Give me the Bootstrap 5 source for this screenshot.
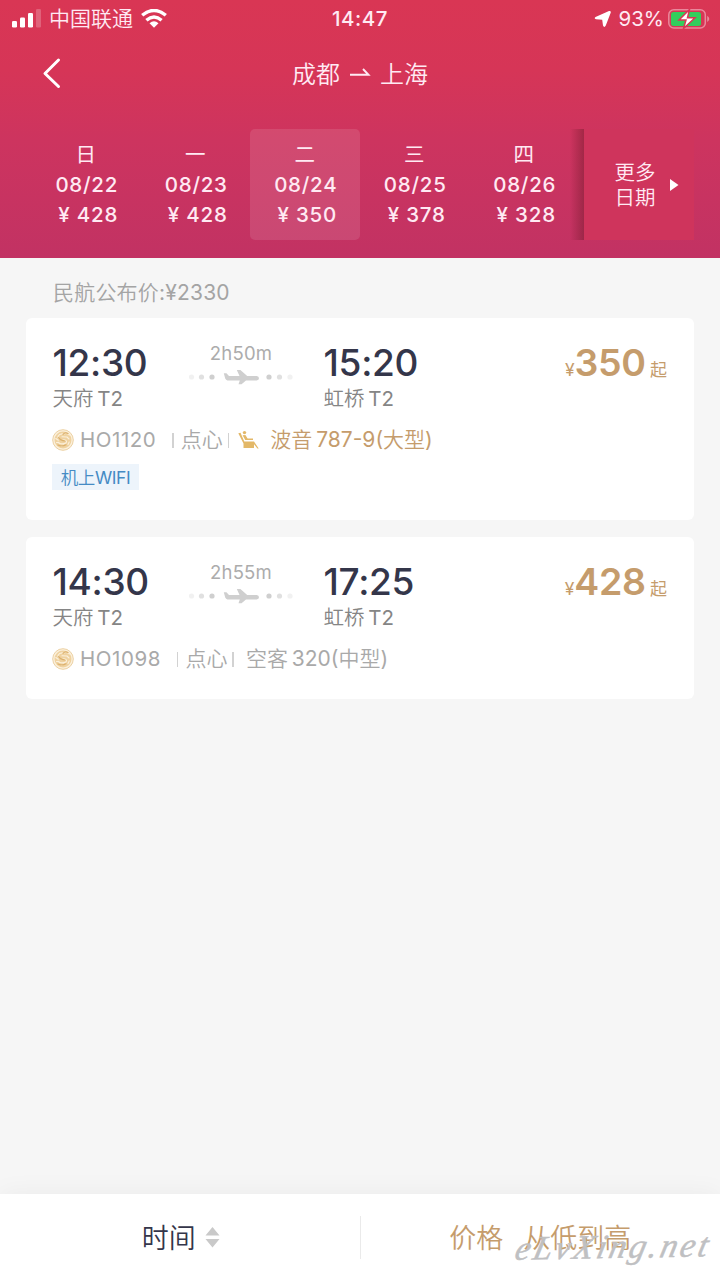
<!DOCTYPE html>
<html lang="zh-CN">
<head>
<meta charset="utf-8">
<meta name="viewport" content="width=device-width, initial-scale=1">
<title>成都 - 上海 航班</title>
<link href="https://cdn.jsdelivr.net/npm/bootstrap@5.3.0/dist/css/bootstrap.min.css" rel="stylesheet">
<style>
body{width:720px;height:1280px;overflow:hidden;background:#f6f6f6;font-family:Inter,"Noto Sans CJK SC",sans-serif;font-weight:350;color:#888;line-height:1}
svg{display:block;flex:none}
.t{white-space:nowrap}
.lat{font-weight:400}
.hero{height:258px;background:linear-gradient(#d93654 0,#d63557 70px,#cd345f 140px,#c23263 257px);color:#ffeaf3}
.status{height:37px;padding:0 10px 0 12px;font-size:21px}
.status .clock{left:0;right:0;top:0;line-height:37px;font-size:20.5px;font-weight:500;letter-spacing:.5px}
.titlebar{height:73px;font-size:24px;padding-top:2px}
.back{left:42px;top:20px}
.dates{margin:18.5px 26px 0 31px;height:111.5px}
.day{width:109.5px;padding-top:11px;font-size:20.5px;font-weight:500;line-height:30px;border-radius:5px}
.day.active{background:rgba(255,255,255,.11)}
.day .dn{font-weight:400;font-size:20.5px}
.day .dt{letter-spacing:.75px;padding-left:2px}
.day .pr{padding-left:5px;letter-spacing:.8px}
.edge{width:14px;margin-left:-8.5px;background:linear-gradient(90deg,rgba(110,25,40,0),rgba(110,25,40,.45))}
.more{width:110px;background:#cf345c;font-size:20.5px;line-height:24.5px;padding:3px 0 0 27px}
.more svg{position:relative;top:-1px}
.notice{height:60px;padding:20px 0 0 53px;font-size:21px;line-height:30px;color:#a4a4a4;letter-spacing:.2px}
.flight{margin:0 26.5px 17px 26px;padding:28px 26.5px 0 26.5px;border:0;border-radius:6px;background:#fff}
.f1{height:202px}.f2{height:162px}
.time{font-size:37px;font-weight:500;line-height:34px;height:34px;color:#34364a;letter-spacing:-.3px}
.port{font-size:20.5px;line-height:38px;height:38px;color:#858585;word-spacing:-2px}
.from{width:136px}.path{width:105px}.to{margin-left:30px;width:150px}
.dur{font-size:18.5px;font-weight:400;line-height:15px;height:13px;color:#acacac;letter-spacing:.2px}
.gold{color:#c59c6c}
.price{margin-left:auto;line-height:34px;height:34px}
.price b{font-size:37.5px;font-weight:600;letter-spacing:-.4px}
.price small{font-size:17.5px;font-weight:400}
.price small:last-child{font-size:17px}
.info{height:28px;margin-top:8px;font-size:21px;color:#a9a9a9;word-spacing:-2px}
.info .t{line-height:28px}
.num{margin:0 16px 0 6px;font-size:20.5px;font-weight:400;letter-spacing:.55px}
.bar{width:1.5px;height:15px;background:#d2d2d2}
.wifi{width:87px;height:26px;background:#edf4fb;color:#458bc4;font-size:17.5px;margin:10px 0 0 -.5px;padding-top:1px;letter-spacing:-.4px}
.sort{height:86px;background:#fff;box-shadow:0 -2px 24px rgba(0,0,0,.045);font-size:27px;line-height:40px;color:#34364a}
.sort .lbl{padding-top:3px}
.sort .vr-line{width:1px;height:43px;background:#eaeaea}
.stamp{right:9px;bottom:9px;font:italic 34px/48px "Liberation Serif",serif;color:#bfc0c2;-webkit-text-stroke:.5px #bfc0c2;letter-spacing:2.9px;transform:rotate(-1deg) skewX(-14deg)}
</style>
<script src="https://cdn.jsdelivr.net/npm/bootstrap@5.3.0/dist/js/bootstrap.bundle.min.js"></script>
</head>
<body class="d-flex flex-column position-relative">
<svg width="0" height="0" class="position-absolute"><defs>
<g id="plane" fill="#cfcfcf"><circle cx="2.500" cy="9" r="2.600" opacity=".3"/><circle cx="12.500" cy="9" r="2.600" opacity=".65"/><circle cx="23" cy="9" r="2.600"/><circle cx="80" cy="9" r="2.600"/><circle cx="90.500" cy="9" r="2.600" opacity=".65"/><circle cx="101" cy="9" r="2.600" opacity=".3"/>
<path d="M34.800 5.200h2.600l2.600 2.700h10.500L47.800 2h3.600l6.800 5.900h9.500q2.300.2 2.300 2.300t-2.300 2.200H57L52.500 16.200h-3l1.300-3.800H38.500q-1.600 0-2.300-1.800z"/></g>
<g id="logo"><circle cx="11" cy="11" r="10.300" fill="#fbf0dc" stroke="#ecd1a3" stroke-width="1"/><circle cx="11" cy="11" r="8.500" fill="#efd2a0"/><path d="M17.500 6q-3-2.500-6-1Q7.500 4.300 6 7.200q-.5 2.300 2.500 3.200l4.500.7q2.600 1 .8 3-2.600 1.500-6.800.2M3.800 9.500l2.500 1.800M10 7.800l5 .2 2 2M4.500 13.500l2.500-.2M9.500 17l2.200-.8M16 15.500l1.200-2.500" fill="none" stroke="#fbf0dc" stroke-width="1.100" stroke-linecap="round" stroke-linejoin="round"/><path d="M16 4.500q-3-1.500-5 .9M6.500 8.700q2 2.900 6.500 3.300M6 16q4 2 8-.2" fill="none" stroke="#dcb16d" stroke-width="1.200" stroke-linecap="round"/></g>
</defs></svg>
<header class="hero">
  <div class="status position-relative d-flex align-items-center">
    <svg width="30" height="20" viewBox="0 0 30 20" fill="#fff"><rect y="12" width="5" height="6.500" rx="1.300"/><rect x="8" y="8.500" width="5" height="10" rx="1.300"/><rect x="16" y="4" width="5" height="14.500" rx="1.300"/><rect x="24" y="0" width="5" height="18.500" rx="1.300" opacity=".22"/></svg>
    <span class="t" style="margin:0 0 0 7px">中国联通</span>
    <svg class="ms-2" width="26" height="20" viewBox="0 0 26 20" fill="none" stroke="#fff" stroke-width="3.400"><path d="M1.200 6.300Q13-3.400 24.800 6.300M5.400 11.200Q13 5 20.600 11.200"/><path d="M8.500 14.200Q13 10.500 17.500 14.200L13 18.800z" fill="#fff" stroke="none"/></svg>
    <div class="clock position-absolute text-center">14:47</div>
    <svg class="ms-auto" width="18" height="18" viewBox="0 0 18 18" fill="#fff"><path d="M1.500 6.900 15 1Q17.200.6 16.700 2.700L11.800 15.500Q10.200 18.300 9 15.500L8.200 9.800 2 9.300Q-.4 8.400 1.500 6.900z"/></svg>
    <span class="t lat" style="margin:1px 4px 0 6px;font-size:20.5px">93%</span>
    <svg width="42" height="20" viewBox="0 0 42 20"><rect x=".8" y=".8" width="36.500" height="18.200" rx="5" fill="none" stroke="#e9889b" stroke-width="1.500"/><path d="M39.200 6.800q4.200 3.100 0 6.200z" fill="#e9889b"/><rect x="3" y="3" width="30" height="14" rx="2.500" fill="#33cd5c"/><path d="M21.500.5 11 11h7l-2.500 8.500L27 8.700h-7.500z" fill="#fff" stroke="#d93654" stroke-width="1.500"/></svg>
  </div>
  <div class="titlebar position-relative d-flex justify-content-center align-items-center">
    <svg class="back position-absolute" width="20" height="32" viewBox="0 0 20 32" fill="none" stroke="#fff" stroke-width="3" stroke-linecap="round" stroke-linejoin="round"><path d="M16.500 3 3 16.500 16.500 29.500"/></svg>
    <span class="t">成都</span>
    <svg style="margin:-2px 9px 0 10px" width="21" height="14" viewBox="0 0 21 14" fill="none" stroke="#ffeaf3" stroke-width="1.900"><path d="M0 7.800h18.500L13 2"/></svg>
    <span class="t">上海</span>
  </div>
  <div class="dates d-flex text-center">
    <div class="day"><div class="dn">日</div><div class="dt">08/22</div><div class="pr">¥ 428</div></div>
    <div class="day"><div class="dn">一</div><div class="dt">08/23</div><div class="pr">¥ 428</div></div>
    <div class="day active"><div class="dn">二</div><div class="dt">08/24</div><div class="pr">¥ 350</div></div>
    <div class="day"><div class="dn">三</div><div class="dt">08/25</div><div class="pr">¥ 378</div></div>
    <div class="day"><div class="dn">四</div><div class="dt">08/26</div><div class="pr">¥ 328</div></div>
    <div class="edge"></div>
    <div class="more d-flex align-items-center justify-content-center"><span>更多<br>日期</span><svg style="margin:0 12px 0 14px" width="9" height="12" viewBox="0 0 9 12"><path d="M0 0 8.500 6 0 12z" fill="#fff"/></svg></div>
  </div>
</header>
<main class="flex-grow-1">
  <div class="notice t">民航公布价<span class="lat">:¥2330</span></div>
  <section class="card flight f1">
    <div class="d-flex">
      <div class="from"><div class="time">12:30</div><div class="port t">天府 <span class="lat">T2</span></div></div>
      <div class="path d-flex flex-column align-items-center"><div class="dur">2h50m</div><svg width="105" height="18" style="margin-top:9px"><use href="#plane"/></svg></div>
      <div class="to"><div class="time">15:20</div><div class="port t">虹桥 <span class="lat">T2</span></div></div>
      <div class="price gold t"><small>¥</small><b>350</b> <small>起</small></div>
    </div>
    <div class="info d-flex align-items-center"><svg width="22" height="22" style="margin-left:-.5px"><use href="#logo"/></svg><span class="t num">HO1120</span><i class="bar"></i><span class="t" style="margin:0 5px 0 7px">点心</span><i class="bar"></i>
      <svg style="margin:0 10px 0 9px" width="22" height="20" viewBox="0 0 22 20" fill="#e3b868"><circle cx="6.500" cy="2.600" r="1.700"/><path d="M.3 3.300 2.500 2.800 6.300 11.500H16l4.700 7h-1.300L16 14.300V18H5.500v-4.600z"/><path d="M4.600 5.300 7.400 5l2.200 3.400H15v1.700H7.200z"/></svg>
      <span class="t gold">波音 <span class="lat">787-9(</span>大型<span class="lat">)</span></span></div>
    <div class="wifi d-flex align-items-center justify-content-center t">机上<span class="lat">WIFI</span></div>
  </section>
  <section class="card flight f2">
    <div class="d-flex">
      <div class="from"><div class="time">14:30</div><div class="port t">天府 <span class="lat">T2</span></div></div>
      <div class="path d-flex flex-column align-items-center"><div class="dur">2h55m</div><svg width="105" height="18" style="margin-top:9px"><use href="#plane"/></svg></div>
      <div class="to"><div class="time">17:25</div><div class="port t">虹桥 <span class="lat">T2</span></div></div>
      <div class="price gold t"><small>¥</small><b>428</b> <small>起</small></div>
    </div>
    <div class="info d-flex align-items-center"><svg width="22" height="22" style="margin-left:-.5px"><use href="#logo"/></svg><span class="t num">HO1098</span><i class="bar"></i><span class="t" style="margin:0 5px 0 7px">点心</span><i class="bar"></i><span class="t" style="margin-left:12px">空客 <span class="lat">320(</span>中型<span class="lat">)</span></span></div>
  </section>
</main>
<footer class="sort d-flex align-items-center position-relative">
  <div class="w-50 d-flex justify-content-center align-items-center" style="padding-left:2px"><span class="lbl">时间</span><svg style="margin-left:9px" width="15" height="22" viewBox="0 0 15 22" fill="#c9c9c9"><path d="M7.500 1 14.500 9.500H.5zM7.500 21.500 14.500 13H.5z"/></svg></div>
  <div class="vr-line"></div>
  <div class="w-50 text-center gold t lbl"><span>价格</span><span style="margin-left:20px">从低到高</span></div>
  <div class="stamp position-absolute t">eLvXing.net</div>
</footer>
</body>
</html>
